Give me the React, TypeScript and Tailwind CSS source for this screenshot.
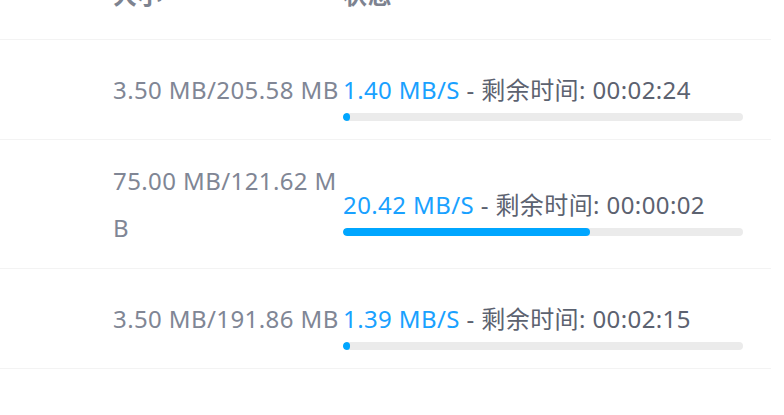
import React from "react";

type Task = {
	done: number;
	total: number;
	speed: string;
	left: string;
};

const tasks: Task[] = [
	{ done: 3.5, total: 205.58, speed: "1.40 MB/S", left: "00:02:24" },
	{ done: 75.0, total: 121.62, speed: "20.42 MB/S", left: "00:00:02" },
	{ done: 3.5, total: 191.86, speed: "1.39 MB/S", left: "00:02:15" },
];

function Row({ task }: { task: Task }) {
	const percent = (task.done / task.total) * 100;
	return (
		<div className="flex items-center min-h-[100px] py-[17px] border-b border-[#f3f3f3]">
			<div className="w-[97px] shrink-0" />
			<div className="w-[246px] shrink-0 pl-4 text-[#808695] leading-[47px] break-all">
				{task.done.toFixed(2)} MB/{task.total.toFixed(2)} MB
			</div>
			<div className="flex-1 flex flex-col pt-2">
				<div className="leading-[47px] whitespace-nowrap">
					<span className="text-[#19a1ff]">{task.speed}</span>
					<span className="text-[#5c6270]"> - 剩余时间: {task.left}</span>
				</div>
				<div className="w-[400px] h-2 rounded-full bg-[#ebebeb] overflow-hidden">
					<div
						className="h-full rounded-full bg-[#00a6ff]"
						style={{ width: `${Math.max(percent, 1.2)}%` }}
					/>
				</div>
			</div>
		</div>
	);
}

export default function App() {
	return (
		<div
			className="w-[784px] h-[415px] overflow-hidden bg-white text-[24px] tracking-[0.4px]"
			style={{ fontFamily: '"Noto Sans", "Noto Sans CJK SC", sans-serif' }}
		>
			<div className="w-[771px] -mt-[49px]">
				<div className="flex items-center h-[89px] border-b border-[#f3f3f3] font-bold text-[#7d8390]">
					<div className="w-[97px] shrink-0" />
					<div className="w-[246px] shrink-0 pl-4">大小</div>
					<div className="flex-1">状态</div>
				</div>
				{tasks.map((t, i) => (
					<Row key={i} task={t} />
				))}
			</div>
		</div>
	);
}
